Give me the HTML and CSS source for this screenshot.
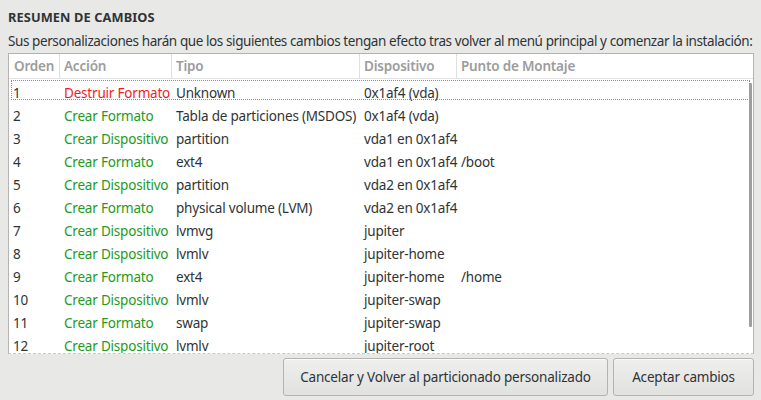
FILE: index.html
```html
<!DOCTYPE html>
<html lang="es">
<head>
<meta charset="utf-8">
<link rel="stylesheet" href="styles.css">
</head>
<body>
<div class="page">
  <h1 class="title">RESUMEN DE CAMBIOS</h1>
  <p class="desc">Sus personalizaciones harán que los siguientes cambios tengan efecto tras volver al menú principal y comenzar la instalación:</p>
  <div class="frame">
    <div class="head row">
      <div class="cell c1">Orden</div>
      <div class="cell c2">Acción</div>
      <div class="cell c3">Tipo</div>
      <div class="cell c4">Dispositivo</div>
      <div class="cell c5">Punto de Montaje</div>
    </div>
    <div class="list">
      <div class="row focus"><div class="cell">1</div><div class="cell red">Destruir Formato</div><div class="cell">Unknown</div><div class="cell">0x1af4 (vda)</div><div class="cell"></div></div>
      <div class="row"><div class="cell">2</div><div class="cell green">Crear Formato</div><div class="cell">Tabla de particiones (MSDOS)</div><div class="cell">0x1af4 (vda)</div><div class="cell"></div></div>
      <div class="row"><div class="cell">3</div><div class="cell green">Crear Dispositivo</div><div class="cell">partition</div><div class="cell">vda1 en 0x1af4</div><div class="cell"></div></div>
      <div class="row"><div class="cell">4</div><div class="cell green">Crear Formato</div><div class="cell">ext4</div><div class="cell">vda1 en 0x1af4</div><div class="cell">/boot</div></div>
      <div class="row"><div class="cell">5</div><div class="cell green">Crear Dispositivo</div><div class="cell">partition</div><div class="cell">vda2 en 0x1af4</div><div class="cell"></div></div>
      <div class="row"><div class="cell">6</div><div class="cell green">Crear Formato</div><div class="cell">physical volume (LVM)</div><div class="cell">vda2 en 0x1af4</div><div class="cell"></div></div>
      <div class="row"><div class="cell">7</div><div class="cell green">Crear Dispositivo</div><div class="cell">lvmvg</div><div class="cell">jupiter</div><div class="cell"></div></div>
      <div class="row"><div class="cell">8</div><div class="cell green">Crear Dispositivo</div><div class="cell">lvmlv</div><div class="cell">jupiter-home</div><div class="cell"></div></div>
      <div class="row"><div class="cell">9</div><div class="cell green">Crear Formato</div><div class="cell">ext4</div><div class="cell">jupiter-home</div><div class="cell">/home</div></div>
      <div class="row"><div class="cell">10</div><div class="cell green">Crear Dispositivo</div><div class="cell">lvmlv</div><div class="cell">jupiter-swap</div><div class="cell"></div></div>
      <div class="row"><div class="cell">11</div><div class="cell green">Crear Formato</div><div class="cell">swap</div><div class="cell">jupiter-swap</div><div class="cell"></div></div>
      <div class="row"><div class="cell">12</div><div class="cell green">Crear Dispositivo</div><div class="cell">lvmlv</div><div class="cell">jupiter-root</div><div class="cell"></div></div>
      <div class="scrollbar"></div>
    </div>
  </div>
  <div class="actions">
    <button class="btn btn-cancel">Cancelar y Volver al particionado personalizado</button>
    <button class="btn btn-accept">Aceptar cambios</button>
  </div>
</div>
</body>
</html>
```
FILE: styles.css
```css
html, body {
  margin: 0;
  padding: 0;
  background: #e8e8e7;
}
body {
  font-family: "Noto Sans", "DejaVu Sans", sans-serif;
  font-size: 13.5px;
  color: #2e3436;
  width: 761px;
  height: 400px;
  overflow: hidden;
}
.page {
  padding: 8px 7px 0 8px;
  display: flex;
  flex-direction: column;
}
.title {
  margin: 0;
  height: 19px;
  font-size: 12.8px;
  font-weight: bold;
  line-height: 19px;
  letter-spacing: 0.1px;
}
.desc {
  margin: 5px 0 0 0;
  height: 18px;
  line-height: 18px;
  letter-spacing: -0.41px;
  white-space: nowrap;
}
.frame {
  margin-top: 3px;
  border: 1px solid #b4b4b2;
  border-bottom: 1px dashed #c8c8c8;
  background: #fff;
  height: 299px;
  overflow: hidden;
  display: flex;
  flex-direction: column;
}
.row {
  display: grid;
  grid-template-columns: 51px 112px 188px 97px 1fr;
  height: 23px;
  align-items: center;
}
.cell {
  padding-left: 4px;
  white-space: nowrap;
  letter-spacing: -0.2px;
  line-height: 23px;
}
.head {
  height: 24px;
  border-bottom: 1px solid #e3e3e3;
  color: #9c9c9c;
  font-weight: 600;
  flex: none;
}
.head .cell {
  border-right: 1px solid #e0e0e0;
  height: 24px;
  line-height: 24px;
}
.head .c1 { padding-left: 5px; }
.head .c5 { border-right: none; }
.list {
  position: relative;
  flex: 1;
  padding-top: 3px;
}
.focus {
  position: relative;
}
.focus::before {
  content: "";
  position: absolute;
  left: 2px;
  right: 3px;
  top: -2px;
  bottom: 5px;
  border: 1px dotted #8f8f8f;
  pointer-events: none;
}
.red { color: #ef1d1d; }
.green { color: #229a22; }
.scrollbar {
  position: absolute;
  right: 1px;
  top: 4px;
  width: 3px;
  height: 244px;
  background: #9e9e9e;
  border-radius: 1px;
}
.actions {
  display: flex;
  justify-content: flex-end;
  gap: 5px;
  margin-top: 4px;
}
.btn {
  font-family: "Noto Sans", "DejaVu Sans", sans-serif;
  font-size: 13.5px;
  color: #2e3436;
  height: 38px;
  border: 1px solid #b3b3b1;
  border-radius: 3px;
  background: linear-gradient(#efefed, #e1e1df);
  box-shadow: inset 0 1px #fafafa;
  padding: 0;
  letter-spacing: -0.2px;
}
.btn-cancel { width: 325px; }
.btn-accept { width: 141px; }
```
